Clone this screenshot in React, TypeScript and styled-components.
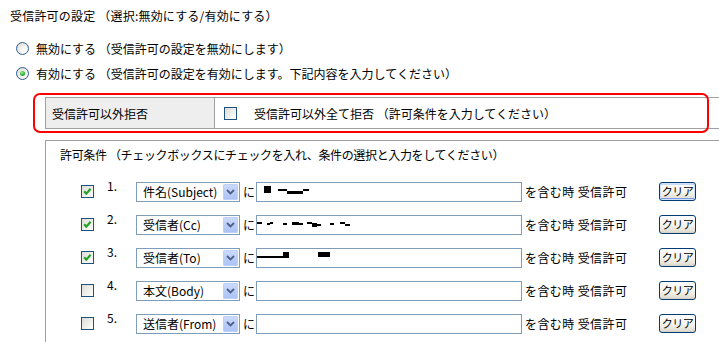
import React from 'react';
import styled, { createGlobalStyle, css } from 'styled-components';

const GlobalStyle = createGlobalStyle`
  html, body { margin: 0; padding: 0; background: #ffffff; }
  body {
    overflow: hidden;
    font-family: "Noto Sans CJK JP", "Noto Sans", sans-serif;
    font-size: 12px;
    color: #000000;
  }
`;

const Page = styled.div`
  width: 780px;
  padding-top: 8px;
`;

const Title = styled.div`
  padding-left: 10px;
  line-height: 16px;
  white-space: pre;
  letter-spacing: 0.2px;
`;

const RadioGroup = styled.div`
  margin-top: 12px;
  display: flex;
  flex-direction: column;
`;

const RadioRow = styled.label`
  display: flex;
  align-items: center;
  height: 25px;
  padding-left: 16px;
  white-space: pre;
`;

const RadioDot = styled.span<{ $checked?: boolean }>`
  width: 13px;
  height: 13px;
  box-sizing: border-box;
  border-radius: 50%;
  border: 1px solid #2c5d93;
  background: radial-gradient(circle at 70% 72%, #ffffff 0%, #f1f1ec 45%, #d4d4cc 100%);
  display: flex;
  align-items: center;
  justify-content: center;
  margin-right: 7px;
  &::after {
    content: '';
    width: 5px;
    height: 5px;
    border-radius: 50%;
    background: radial-gradient(circle at 40% 35%, #a6eca6 0%, #2fb32f 55%, #1b8a1b 100%);
    display: ${p => (p.$checked ? 'block' : 'none')};
  }
`;

const Section = styled.div`
  padding-left: 45px;
`;

const Highlight = styled.div`
  position: relative;
  margin-top: 11px;
`;

const RedFrame = styled.div`
  position: absolute;
  left: -12px;
  top: -4px;
  width: 676px;
  height: 40px;
  box-sizing: border-box;
  border: 2px solid #ff0000;
  border-radius: 7px;
  pointer-events: none;
`;

const RuleTable = styled.div`
  display: grid;
  grid-template-columns: 169px 1fr;
  height: 32px;
  box-sizing: border-box;
  border-top: 1px solid #a0a0a0;
  border-bottom: 1px solid #a0a0a0;
  border-left: 1px solid #a0a0a0;
`;

const HeadCell = styled.div`
  background: #eeeeee;
  border-right: 1px solid #a0a0a0;
  display: flex;
  align-items: center;
  padding-left: 6px;
`;

const ValueCell = styled.label`
  display: flex;
  align-items: center;
  padding-left: 9px;
  gap: 17px;
  white-space: pre;
`;

const CheckBox = styled.span`
  flex: none;
  width: 13px;
  height: 13px;
  box-sizing: border-box;
  border: 1px solid #1c5180;
  background: linear-gradient(135deg, #dcdcd7 0%, #f3f3f0 65%, #ffffff 100%);
  display: inline-flex;
  align-items: center;
  justify-content: center;
`;

const CondBox = styled.div`
  margin-top: 11px;
  border-top: 1px solid #a0a0a0;
  border-left: 1px solid #a0a0a0;
  padding-top: 6px;
  height: 220px;
`;

const CondHeader = styled.div`
  padding-left: 14px;
  line-height: 16px;
  white-space: pre;
  letter-spacing: -0.35px;
`;

const Rows = styled.div`
  margin-top: 12px;
  display: flex;
  flex-direction: column;
`;

const Row = styled.div`
  display: flex;
  align-items: center;
  height: 33px;
  padding-left: 35px;
`;

const Num = styled.span`
  align-self: flex-start;
  margin-top: 3px;
  margin-left: 13px;
  width: 29px;
  line-height: 16px;
`;

const SelectBox = styled.div`
  width: 104px;
  height: 20px;
  box-sizing: border-box;
  border: 1px solid #7f9db9;
  background: #ffffff;
  display: flex;
  align-items: center;
  padding: 1px;
`;

const SelectText = styled.span`
  flex: 1;
  padding-left: 5px;
  white-space: nowrap;
  line-height: 16px;
`;

const SelectButton = styled.span`
  width: 15px;
  height: 16px;
  box-sizing: border-box;
  border: 1px solid #bcd0f8;
  border-radius: 1px;
  background: linear-gradient(180deg, #cbdafc 0%, #b7cbf7 60%, #aec4f6 100%);
  display: flex;
  align-items: center;
  justify-content: center;
`;

const Ni = styled.span`
  margin-left: 3px;
  width: 13px;
  line-height: 16px;
`;

const FieldWrap = styled.span`
  position: relative;
  display: inline-flex;
`;

const TextInput = styled.input`
  width: 266px;
  height: 20px;
  box-sizing: border-box;
  border: 1px solid #7f9db9;
  background: #ffffff;
  margin: 0;
  padding: 0 2px;
  font: inherit;
  outline: none;
`;

const Redaction = styled.svg`
  position: absolute;
  left: 0;
  top: 0;
  pointer-events: none;
`;

const Suffix = styled.span`
  margin-left: 3px;
  width: 134px;
  white-space: nowrap;
  line-height: 16px;
  letter-spacing: 0.4px;
`;

const ClearButton = styled.button<{ $focused?: boolean }>`
  width: 37px;
  height: 19px;
  box-sizing: border-box;
  padding: 0;
  margin: 0;
  border: 1px solid #003c74;
  border-radius: 3px;
  background: linear-gradient(180deg, #ffffff 0%, #f4f3ee 55%, #e6e3d8 85%, #d6d0c5 100%);
  font-family: inherit;
  font-size: 11px;
  letter-spacing: -0.5px;
  white-space: nowrap;
  line-height: 15px;
  color: #000000;
  display: flex;
  align-items: center;
  justify-content: center;
  ${p =>
    p.$focused &&
    css`
      box-shadow: inset 0 0 0 1px #cee0fb, inset 0 -2px 0 0 #7c9ce8, inset 0 2px 0 0 #c8dbfb;
    `}
`;

const CheckMark = () => (
  <svg width="11" height="11" viewBox="0 0 11 11">
    <polyline points="2.2,5.2 4.3,7.6 8.6,2.8" fill="none" stroke="#21a121" strokeWidth="2.1" />
  </svg>
);

const Chevron = () => (
  <svg width="9" height="6" viewBox="0 0 9 6">
    <polyline points="1,1 4.5,4.5 8,1" fill="none" stroke="#4d6185" strokeWidth="1.8" />
  </svg>
);

type Bar = [number, number, number, number];

const rowsData: { checked: boolean; field: string; bars: Bar[]; focused?: boolean }[] = [
  {
    checked: true,
    field: '件名(Subject)',
    focused: true,
    bars: [
      [8, 4, 7, 7],
      [22, 7, 9, 2],
      [31, 9, 16, 3],
      [47, 7, 6, 2],
    ],
  },
  {
    checked: true,
    field: '受信者(Cc)',
    bars: [
      [1, 7, 5, 2],
      [11, 8, 3, 2],
      [14, 7, 3, 2],
      [27, 8, 4, 2],
      [36, 7, 7, 3],
      [43, 8, 4, 2],
      [51, 7, 5, 2],
      [56, 8, 5, 4],
      [61, 9, 4, 2],
      [74, 8, 4, 2],
      [84, 7, 5, 2],
      [89, 9, 5, 2],
    ],
  },
  {
    checked: true,
    field: '受信者(To)',
    bars: [
      [1, 8, 27, 2],
      [27, 4, 6, 6],
      [62, 4, 12, 5],
    ],
  },
  { checked: false, field: '本文(Body)', bars: [] },
  { checked: false, field: '送信者(From)', bars: [] },
];

export default function App() {
  return (
    <>
      <GlobalStyle />
      <Page>
        <Title>{'受信許可の設定 （選択:無効にする/有効にする）'}</Title>
        <RadioGroup>
          <RadioRow>
            <RadioDot />
            {'無効にする （受信許可の設定を無効にします）'}
          </RadioRow>
          <RadioRow>
            <RadioDot $checked />
            {'有効にする （受信許可の設定を有効にします。下記内容を入力してください）'}
          </RadioRow>
        </RadioGroup>
        <Section>
          <Highlight>
            <RuleTable>
              <HeadCell>受信許可以外拒否</HeadCell>
              <ValueCell>
                <CheckBox />
                {'受信許可以外全て拒否 （許可条件を入力してください）'}
              </ValueCell>
            </RuleTable>
            <RedFrame />
          </Highlight>
          <CondBox>
            <CondHeader>{'許可条件 （チェックボックスにチェックを入れ、条件の選択と入力をしてください）'}</CondHeader>
            <Rows>
              {rowsData.map((r, i) => (
                <Row key={i}>
                  <CheckBox>{r.checked && <CheckMark />}</CheckBox>
                  <Num>{i + 1}.</Num>
                  <SelectBox>
                    <SelectText>{r.field}</SelectText>
                    <SelectButton>
                      <Chevron />
                    </SelectButton>
                  </SelectBox>
                  <Ni>に</Ni>
                  <FieldWrap>
                    <TextInput type="text" defaultValue="" />
                    {r.bars.length > 0 && (
                      <Redaction width="266" height="20" viewBox="0 0 266 20">
                        {r.bars.map((b, j) => (
                          <rect key={j} x={b[0]} y={b[1]} width={b[2]} height={b[3]} fill="#000" />
                        ))}
                      </Redaction>
                    )}
                  </FieldWrap>
                  <Suffix>を含む時 受信許可</Suffix>
                  <ClearButton $focused={r.focused}>クリア</ClearButton>
                </Row>
              ))}
            </Rows>
          </CondBox>
        </Section>
      </Page>
    </>
  );
}
